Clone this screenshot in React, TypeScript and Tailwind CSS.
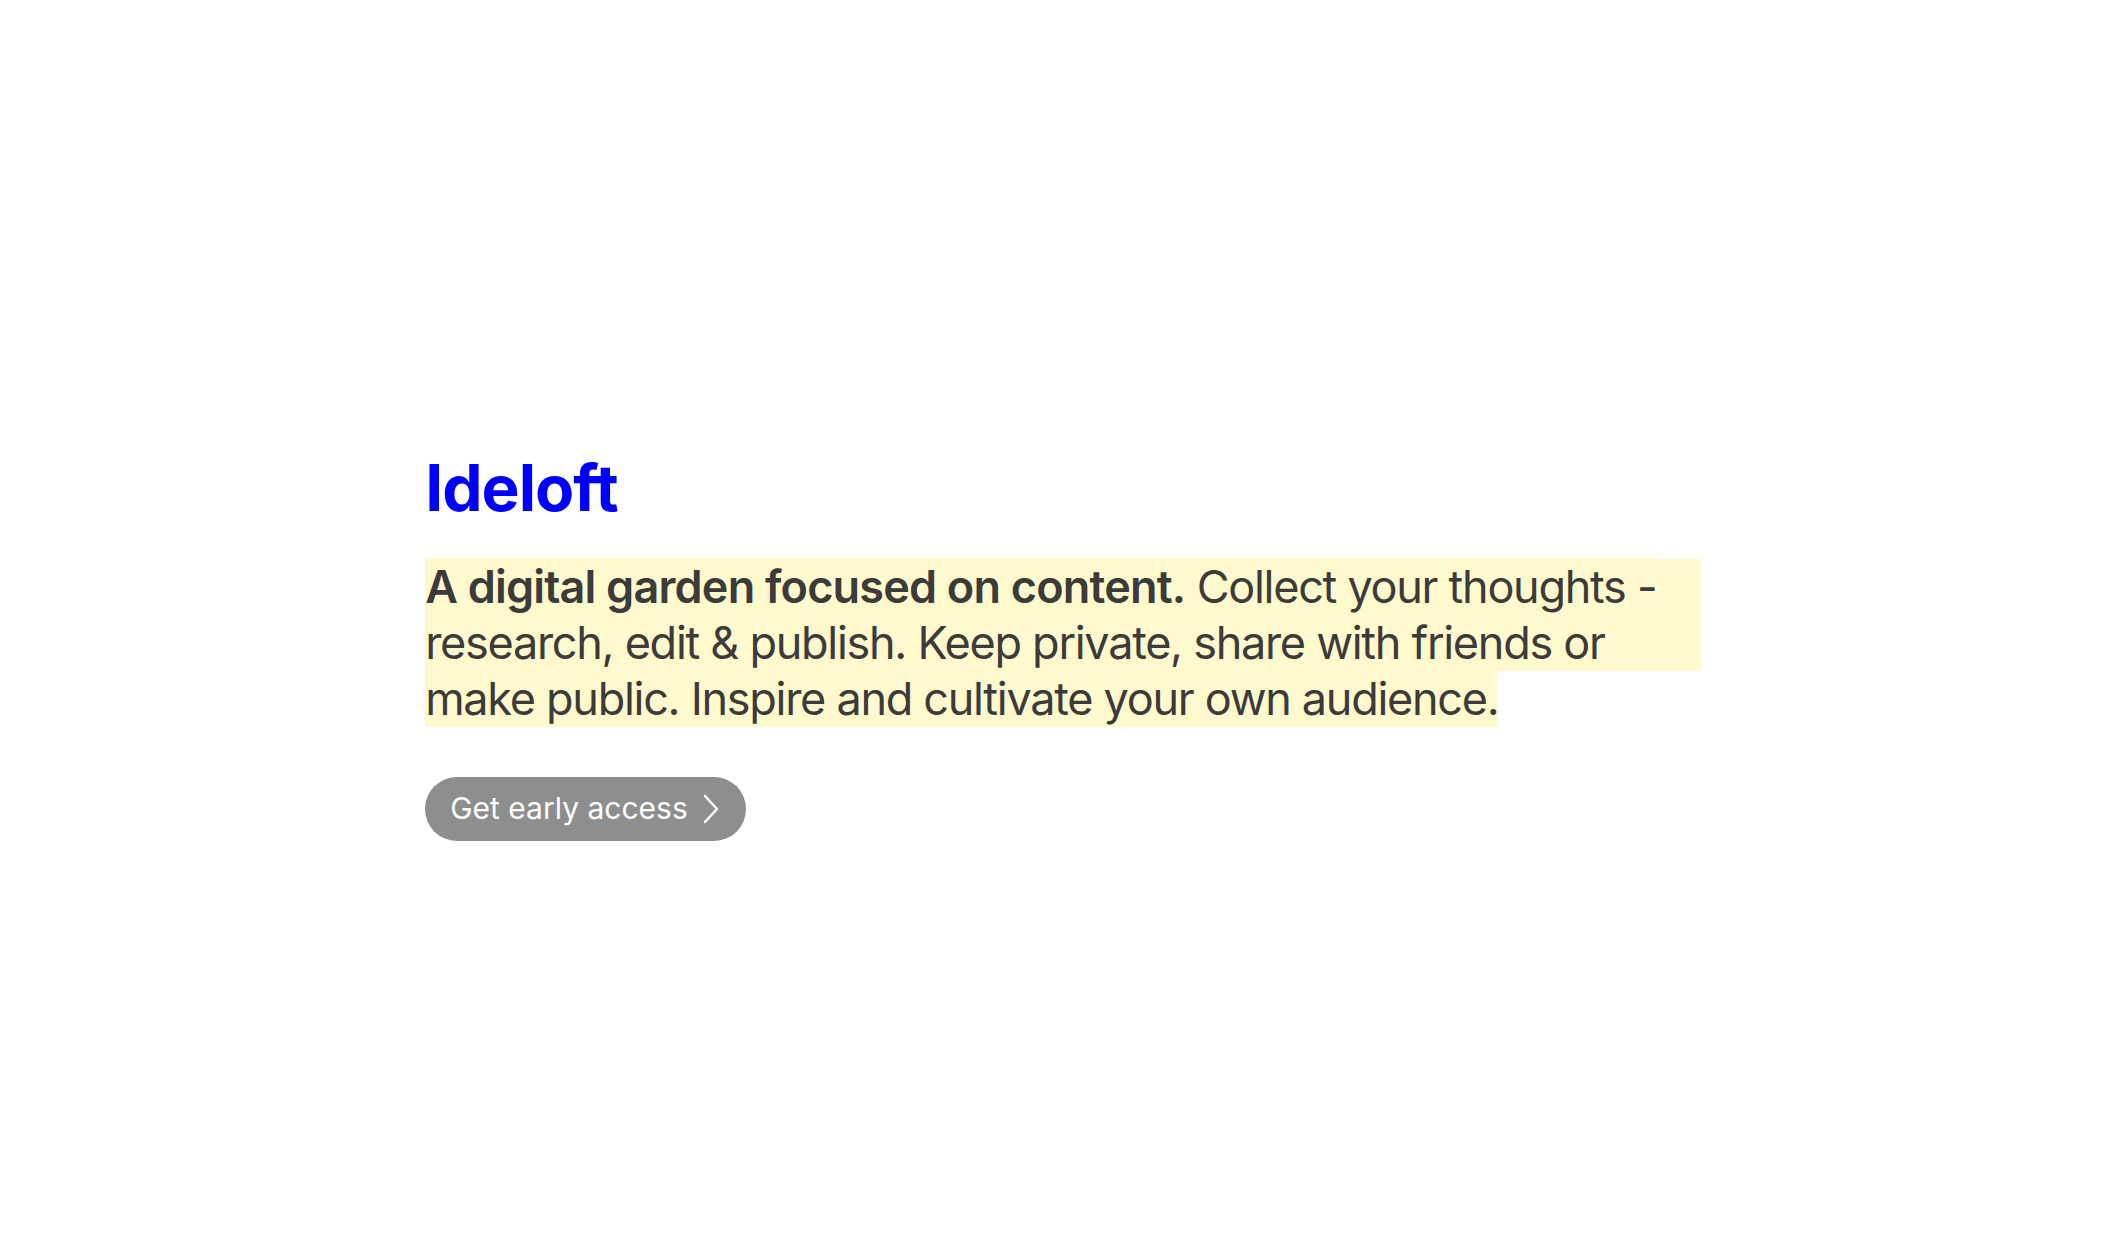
import React from 'react';

function Chevron() {
  return (
    <svg width="16" height="30" viewBox="0 0 16 30" fill="none" className="shrink-0">
      <path d="M2 2 L14 15 L2 28" stroke="white" strokeWidth="2.4" strokeLinecap="round" strokeLinejoin="round" />
    </svg>
  );
}

export default function App() {
  return (
    <main className="min-h-screen bg-white flex items-center pt-8 font-['Inter','Noto_Sans',sans-serif]">
      <div className="w-[60%] mx-auto">
        <h1 className="text-[64px] leading-[1.21] font-bold text-[#0000ff] tracking-[-1px]">Ideloft</h1>

        <p className="mt-8 text-[45px] leading-[56px] tracking-[-1.28px] text-[#3b3b3b] bg-[linear-gradient(to_bottom,#fffacd_112px,transparent_112px)]">
          <span className="bg-[#fffacd] py-px box-decoration-clone">
            <strong className="font-semibold tracking-[-0.8px]">A digital garden focused on content.</strong> Collect
            your thoughts - research, edit &amp; publish. Keep private, share with friends or make public. Inspire and
            cultivate your own audience.
          </span>
        </p>

        <button className="mt-[50px] h-16 pl-[25px] pr-[27px] rounded-full bg-[#8e8e8e] text-white text-[30px] whitespace-nowrap flex items-center gap-[15px]">
          <span>Get early access</span>
          <Chevron />
        </button>
      </div>
    </main>
  );
}
